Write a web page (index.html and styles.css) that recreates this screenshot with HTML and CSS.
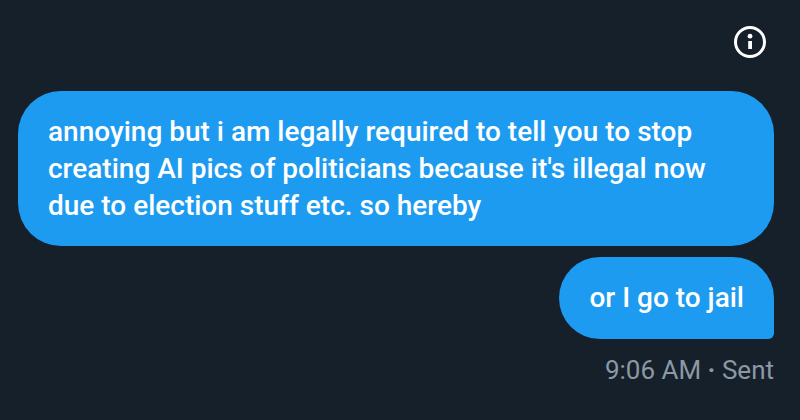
FILE: index.html
```html
<!DOCTYPE html>
<html lang="en">
<head>
  <meta charset="UTF-8" />
  <meta name="viewport" content="width=device-width, initial-scale=1" />
  <title>Messages</title>
  <link rel="stylesheet" href="styles.css">
</head>
<body>
  <header class="topbar">
    <button class="info-btn" type="button" aria-label="Conversation info">
      <svg viewBox="0 0 34 34" width="34" height="34" aria-hidden="true">
        <circle cx="17" cy="17" r="14.5" fill="none" stroke="currentColor" stroke-width="3" />
        <circle cx="17" cy="11.2" r="2.4" fill="currentColor" />
        <rect x="15.2" y="16" width="3.8" height="8" fill="currentColor" />
      </svg>
    </button>
  </header>

  <main class="messages">
    <div class="bubble">annoying but i am legally required to tell you to stop creating AI pics of politicians because it's illegal now due to election stuff etc. so hereby</div>
    <div class="bubble bubble-last">or I go to jail</div>
    <div class="meta">9:06 AM <span class="dot">·</span> Sent</div>
  </main>
</body>
</html>
```
FILE: styles.css
```css
body {
  margin: 0;
  background-color: #16202a;
  font-family: Roboto, "Liberation Sans", sans-serif;
  font-size: 28px;
  font-weight: 500;
  line-height: 37px;
}
.topbar {
  display: flex;
  justify-content: flex-end;
  padding: 25px 33px 32px;
}
.info-btn {
  display: flex;
  padding: 0;
  border: 0;
  background: none;
  color: #fff;
  cursor: pointer;
}
.messages {
  display: flex;
  flex-direction: column;
  align-items: flex-end;
  padding: 0 26px 0 18px;
}
.bubble {
  padding: 22px 30px;
  border-radius: 43px;
  background-color: #1d9bf0;
  color: #fff;
}
.bubble-last {
  margin-top: 11px;
  padding-bottom: 23px;
  border-bottom-right-radius: 6px;
}
.meta {
  margin-top: 13px;
  color: #8b98a5;
  font-size: 26px;
  font-weight: 400;
}
.dot {
  font-weight: 700;
}
```
